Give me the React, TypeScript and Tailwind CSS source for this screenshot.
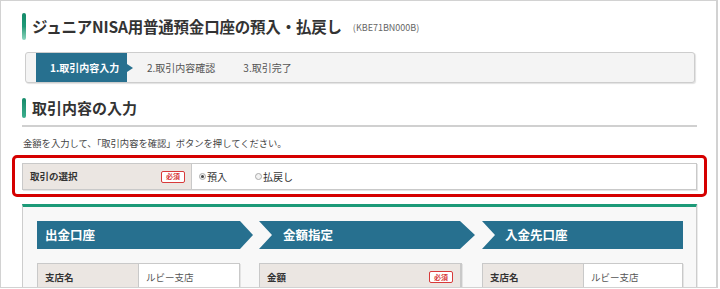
import React from "react";

const font = { fontFamily: '"Noto Sans CJK JP", "Noto Sans", sans-serif' };

function Badge() {
  return (
    <span className="inline-flex items-center justify-center w-[24px] h-[12px] border border-[#d83a3a] rounded-[2px] bg-white text-[7px] font-bold leading-none text-[#d83a3a]">
      必須
    </span>
  );
}

function Radio({ checked, label }: { checked?: boolean; label: string }) {
  return (
    <span className="inline-flex items-center gap-[1px] text-[10px] text-[#333]">
      <span className="w-[7px] h-[7px] rounded-full border border-[#aaa] bg-[#f2f2f2] flex items-center justify-center">
        {checked && <span className="w-[3px] h-[3px] rounded-full bg-[#444]" />}
      </span>
      {label}
    </span>
  );
}

function InfoTable({ label, value, width, labelWidth, required }: { label: string; value?: string; width: string; labelWidth: string; required?: boolean }) {
  return (
    <div className={`${width} h-[28px] mt-[14px] flex border border-[#c9c9c9] bg-white shadow-[1px_1px_0_rgba(0,0,0,0.08)]`}>
      <div className={`${labelWidth} flex items-center justify-between px-[7px] bg-[#ebe6e2] border-r border-[#c9c9c9] text-[9.5px] font-bold text-[#333]`}>
        <span>{label}</span>
        {required && <Badge />}
      </div>
      {value && <div className="flex-1 flex items-center px-[7px] text-[9.5px] text-[#555]">{value}</div>}
    </div>
  );
}

export default function App() {
  return (
    <div style={font} className="w-[718px] h-[288px] overflow-hidden bg-white border border-r-2 border-[#d2d2d2]">
      <div className="w-[675px] ml-[21px] pt-[12px]">
        {/* title */}
        <div className="flex items-center h-[27px]">
          <span className="w-[4px] h-[27px] rounded-[2px] bg-gradient-to-b from-[#148a69] via-[#1f9a78] to-[#8ad6bf]" />
          <h1 className="ml-[6px] text-[15.5px] font-bold text-[#333] tracking-[-0.2px]">ジュニアNISA用普通預金口座の預入・払戻し</h1>
          <span className="ml-[11px] mt-[3px] text-[9px] text-[#666]">(KBE71BN000B)</span>
        </div>

        {/* steps */}
        <div className="mt-[12px] ml-[3px] mr-[2px] h-[31px] flex items-stretch rounded-[3px] border border-[#cdcdcd] bg-[#f4f4f4] shadow-[1px_1px_1px_rgba(0,0,0,0.12)] text-[10px]">
          <div className="relative ml-[10px] w-[91px] flex items-center pl-[14px] bg-[#27708f] text-white font-bold">
            1.取引内容入力
            <span className="absolute right-[-6px] top-1/2 -translate-y-1/2 w-0 h-0 border-y-[4px] border-y-transparent border-l-[6px] border-l-[#27708f]" />
          </div>
          <div className="ml-[20px] flex items-center text-[#555]">2.取引内容確認</div>
          <div className="ml-[28px] flex items-center text-[#555]">3.取引完了</div>
        </div>

        {/* section heading */}
        <div className="mt-[15px] flex items-center h-[20px]">
          <span className="w-[4px] h-[20px] rounded-[2px] bg-gradient-to-b from-[#148a69] to-[#3cae8e]" />
          <h2 className="ml-[6px] text-[15px] font-bold text-[#333]">取引内容の入力</h2>
        </div>
        <div className="mt-[7px] h-[2px] bg-[#d0d0d0]" />

        <p className="mt-[10px] ml-[1px] text-[9.3px] leading-[12px] text-[#444]">金額を入力して、「取引内容を確認」ボタンを押してください。</p>

        {/* highlighted row */}
        <div className="mt-[6px] -mx-[10px] border-[3px] border-[#d50000] rounded-[5px] pt-[5px] pb-[4px] px-[7px]">
          <div className="h-[27px] flex border border-[#c9c9c9] shadow-[1px_1px_0_rgba(0,0,0,0.1)]">
            <div className="w-[169px] flex items-center justify-between pl-[7px] pr-[6px] bg-[#ebe6e2] border-r border-[#c9c9c9] text-[9.5px] font-bold text-[#333]">
              <span>取引の選択</span>
              <Badge />
            </div>
            <div className="flex items-center pl-[7px] gap-[28px]">
              <Radio checked label="預入" />
              <Radio label="払戻し" />
            </div>
          </div>
        </div>

        {/* transfer panel */}
        <div className="mt-[7px] h-[120px] border-t-[3px] border-t-[#1c9a78] border-x border-x-[#cdcdcd] bg-[#f8f8f8] pt-[14px] pl-[14px] shadow-[1px_0_0_rgba(0,0,0,0.08)]">
          <div className="flex">
            <div className="w-[216px]">
              <div className="h-[28px] flex items-center pl-[8px] bg-[#27708f] text-white text-[12.5px] font-bold [clip-path:polygon(0_0,calc(100%-13px)_0,100%_50%,calc(100%-13px)_100%,0_100%)]">
                出金口座
              </div>
              <InfoTable label="支店名" value="ルビー支店" width="w-[203px]" labelWidth="w-[101px]" />
            </div>
            <div className="ml-[6px] w-[216px]">
              <div className="h-[28px] flex items-center pl-[24px] bg-[#27708f] text-white text-[12.5px] font-bold [clip-path:polygon(0_0,calc(100%-15px)_0,100%_50%,calc(100%-15px)_100%,0_100%,13px_50%)]">
                金額指定
              </div>
              <InfoTable label="金額" width="w-[203px]" labelWidth="flex-1" required />
            </div>
            <div className="ml-[7px] w-[201px]">
              <div className="h-[28px] flex items-center pl-[23px] bg-[#27708f] text-white text-[12.5px] font-bold [clip-path:polygon(0_0,100%_0,100%_100%,0_100%,13px_50%)]">
                入金先口座
              </div>
              <InfoTable label="支店名" value="ルビー支店" width="w-[201px]" labelWidth="w-[101px]" />
            </div>
          </div>
        </div>
      </div>
    </div>
  );
}
